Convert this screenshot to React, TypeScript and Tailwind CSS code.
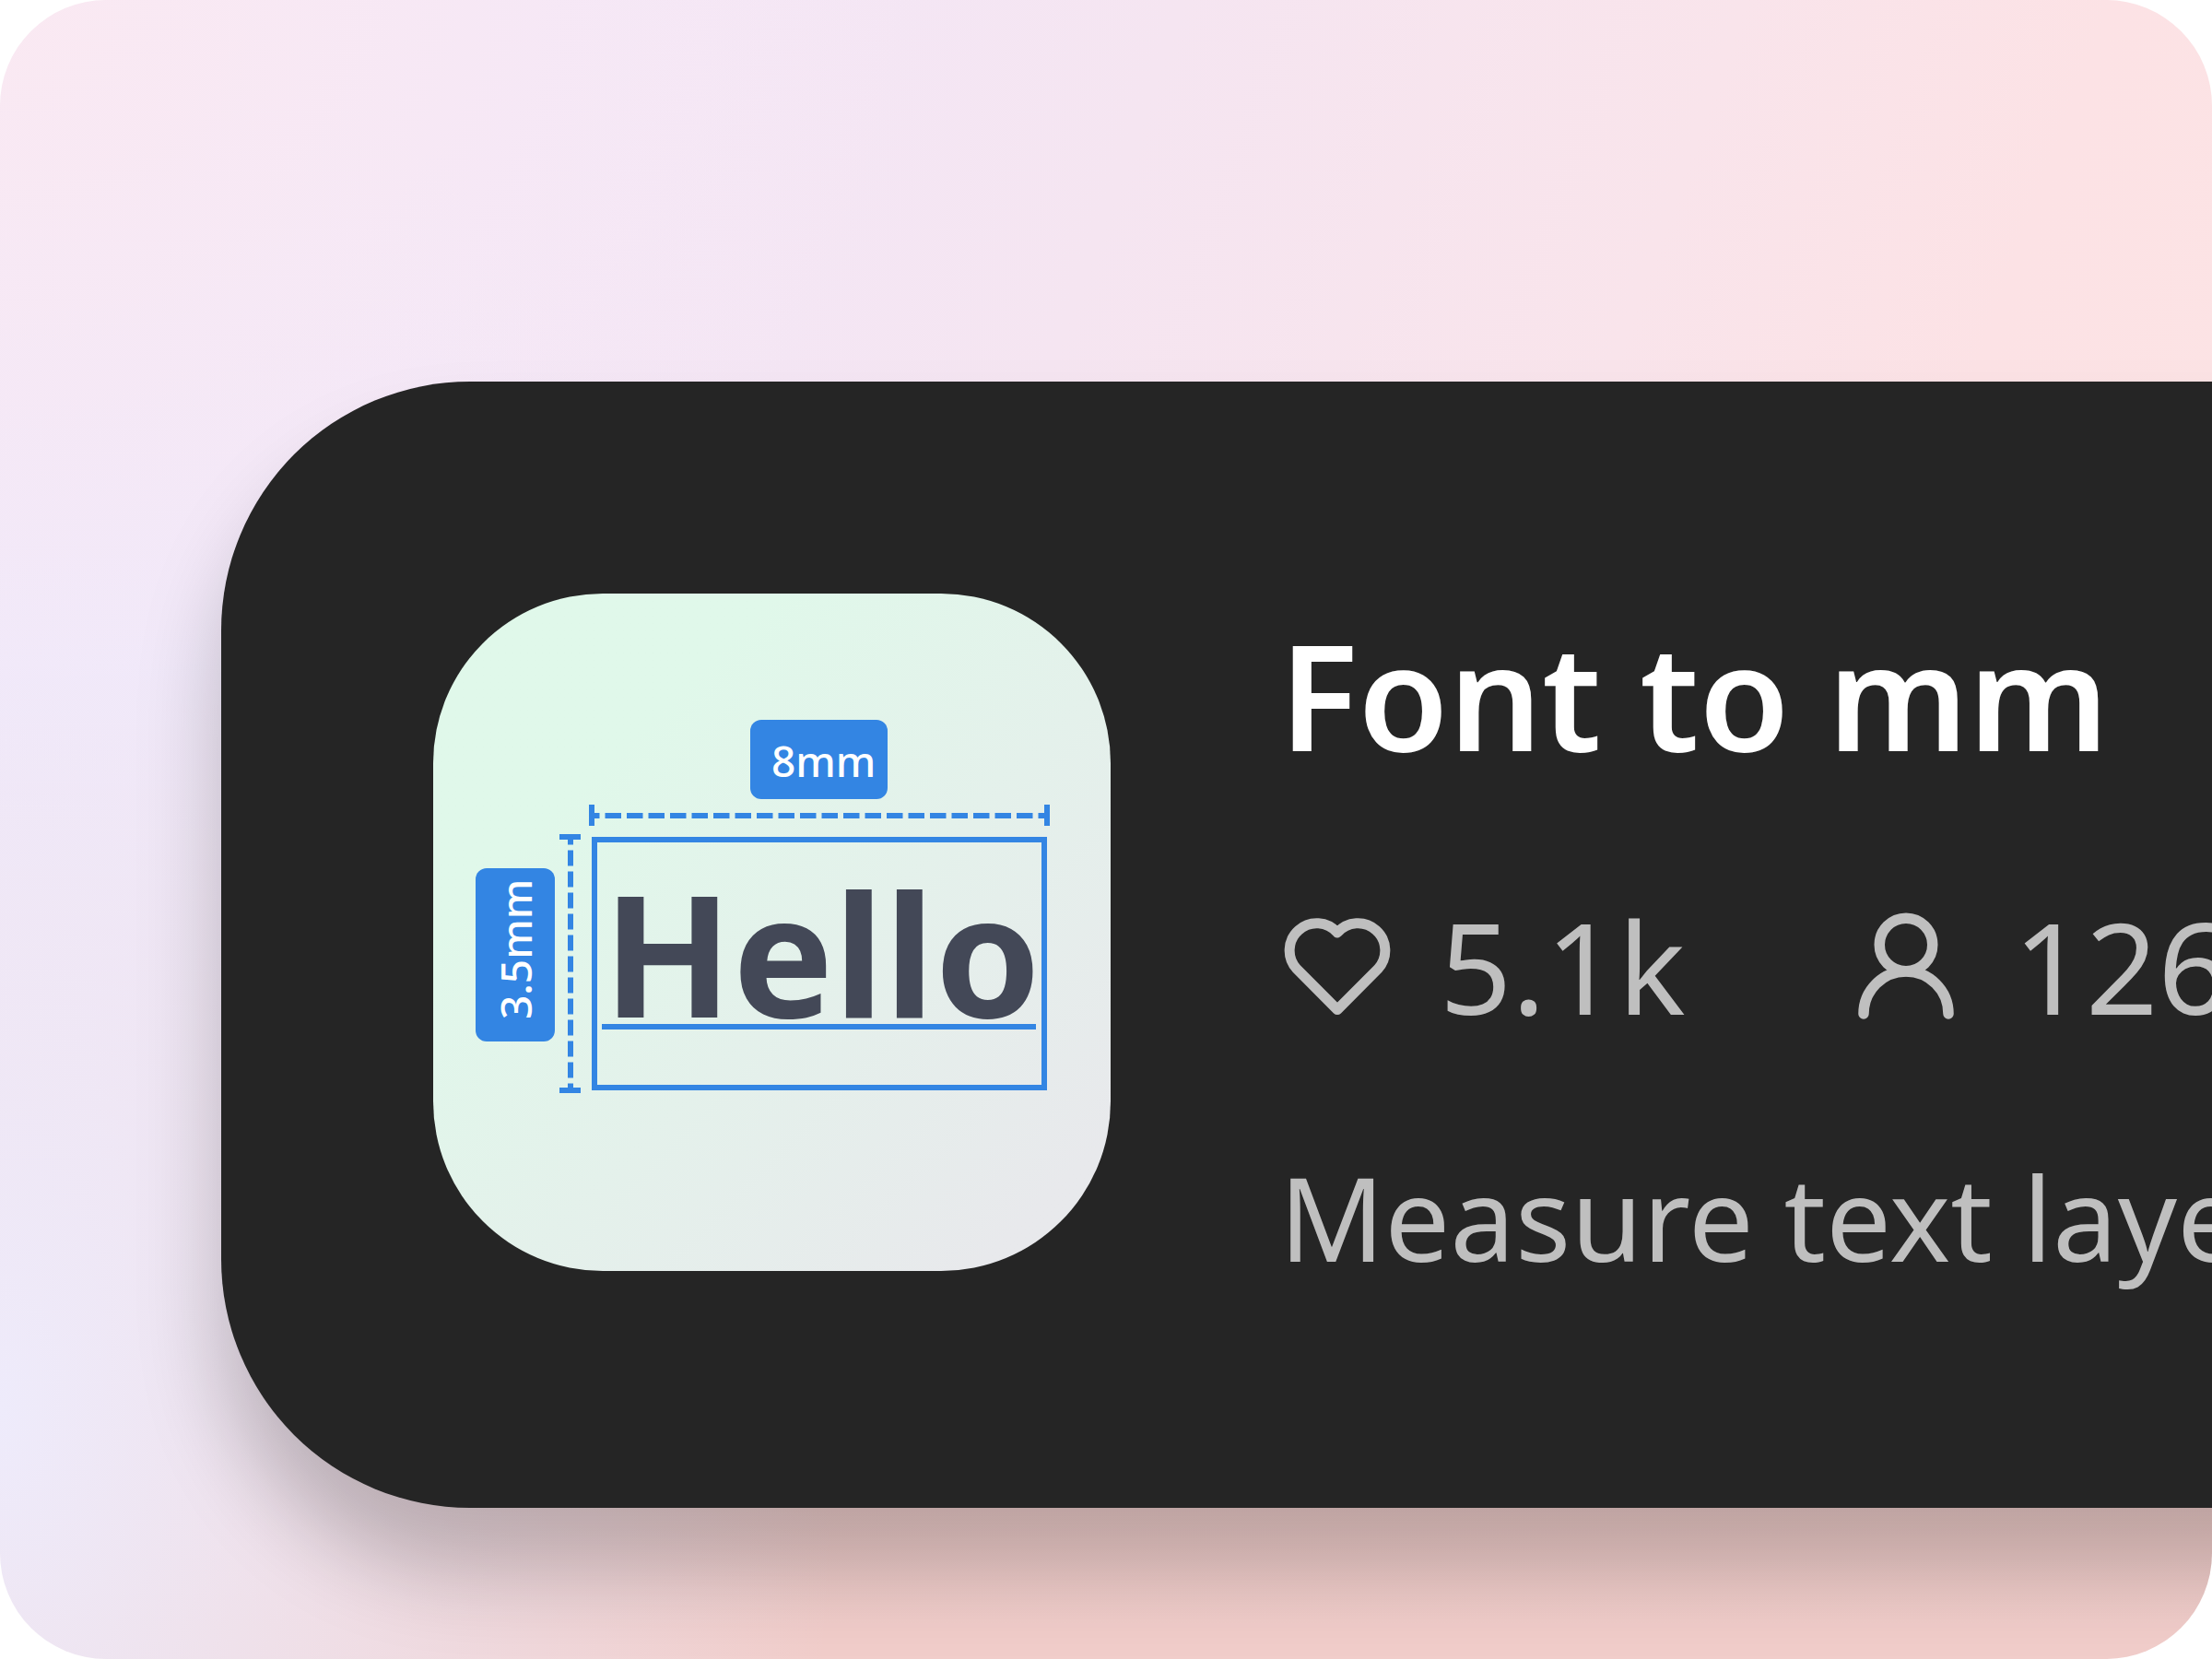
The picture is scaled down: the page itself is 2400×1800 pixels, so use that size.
import React from "react";

function FontToMmLogo() {
  return (
    <svg
      className="size-[735px] shrink-0 rounded-[184px] bg-linear-to-br from-[#e0f8ea] from-25% to-[#e8e9ec] to-90% font-['Noto_Sans',sans-serif]"
      viewBox="0 0 735 735"
      role="img"
      aria-label="Font to mm logo"
    >
      <g fill="none" stroke="#3385e3" strokeWidth="6">
        <path d="M172 241H666" strokeDasharray="17.5 6" strokeDashoffset="9" />
        <path d="M172 229v23M666 229v23" />
        <path d="M149 264V539" strokeDasharray="17 6" strokeDashoffset="8.5" />
        <path d="M137 264h23M137 539h23" />
        <rect x="175" y="267" width="488" height="269" />
        <path d="M183 470H654" />
      </g>
      <rect x="344" y="137" width="149" height="86" rx="12" fill="#3385e3" />
      <text x="367" y="199" fontSize="46" fontWeight="500" fill="#fff">8mm</text>
      <rect x="46" y="298" width="86" height="188" rx="12" fill="#3385e3" />
      <text transform="translate(107 462) rotate(-90)" fontSize="46" fontWeight="500" fill="#fff">3.5mm</text>
      <text x="184" y="460" fontSize="184" fontWeight="700" fill="#434857">Hello</text>
    </svg>
  );
}

function HeartIcon() {
  return (
    <svg className="h-[124px] w-[124px] shrink-0" viewBox="0 0 124 124" fill="none" stroke="currentColor" strokeWidth="11" strokeLinecap="round" strokeLinejoin="round" aria-hidden="true">
      <path d="M63 26A29.5 29.5 0 1 0 19.1 65.4L63 109.5L106.9 65.4A29.5 29.5 0 1 0 63 26Z" />
    </svg>
  );
}

function PersonIcon() {
  return (
    <svg className="h-[124px] w-[124px] shrink-0" viewBox="0 0 124 124" fill="none" stroke="currentColor" strokeWidth="11.5" strokeLinecap="round" aria-hidden="true">
      <circle cx="57" cy="39" r="28.75" />
      <path d="M11 114A46 46 0 0 1 103 114" />
    </svg>
  );
}

function Stat({ icon, value, label }: { icon: React.ReactNode; value: string; label: string }) {
  return (
    <li className="flex items-center gap-[50px]" title={label}>
      {icon}
      <span>{value}</span>
    </li>
  );
}

export default function App() {
  return (
    <main className="min-h-screen overflow-hidden rounded-[115px] bg-[radial-gradient(ellipse_at_0%_0%,#fae9f2_0%,#fae9f200_30%),radial-gradient(38%_90%_at_0%_85%,#eeebfb_0%,#eeebfbb0_30%,#eeebfb00_100%),linear-gradient(to_bottom,#f1cdca00_40%,#f1cdca_98%),linear-gradient(110deg,#f3e7f8_20%,#f5e5f1_42%,#f9e4eb_62%,#fce2e5_75%,#fce4e4_92%)] pt-[414px] pl-[240px] font-['Noto_Sans',sans-serif]">
      <article className="-mr-[400px] flex items-start gap-[183px] rounded-[270px] bg-[#252525] pt-[230px] pr-[230px] pb-[228px] pl-[230px] shadow-[0_69px_92px_rgba(0,0,0,0.22)]">
        <FontToMmLogo />
        <div className="flex flex-col gap-[92px] whitespace-nowrap text-[#bfbfbf]">
          <h1 className="text-[159px] leading-[220px] font-semibold text-white">Font to mm</h1>
          <ul className="flex gap-[182px] text-[137px] leading-[184px]">
            <Stat icon={<HeartIcon />} value="5.1k" label="Likes" />
            <Stat icon={<PersonIcon />} value="126" label="Users" />
          </ul>
          <p className="text-[126px] leading-[176px]">Measure text laye</p>
        </div>
      </article>
    </main>
  );
}
